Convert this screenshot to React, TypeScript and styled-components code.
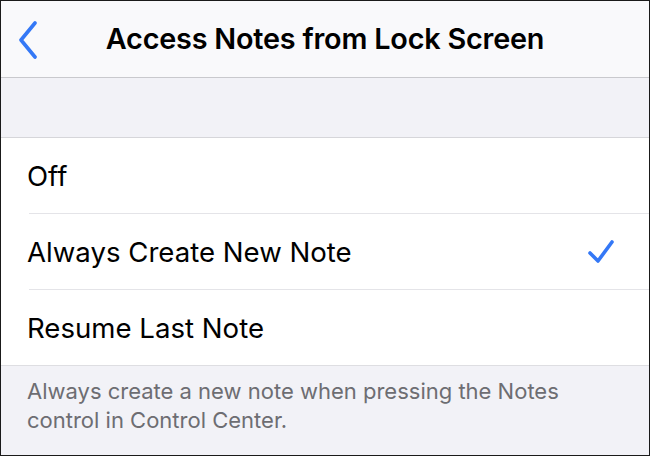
import React from "react";
import styled, { createGlobalStyle } from "styled-components";

const Global = createGlobalStyle`
  html, body { margin: 0; padding: 0; background: #f2f2f7; }
  * { box-sizing: border-box; }
`;

const Frame = styled.div`
  width: 650px;
  height: 456px;
  border: 1px solid #1a1a1a;
  background: #f2f2f7;
  display: flex;
  flex-direction: column;
  overflow: hidden;
  font-family: Inter, "Liberation Sans", sans-serif;
`;

const NavBar = styled.header`
  position: relative;
  height: 77px;
  flex-shrink: 0;
  background: #f9f9fb;
  border-bottom: 1px solid #c9c9cd;
  display: flex;
  align-items: center;
  justify-content: center;
`;

const BackButton = styled.button`
  position: absolute;
  left: 14px;
  top: 19px;
  width: 26px;
  height: 40px;
  border: 0;
  padding: 0;
  background: transparent;
  display: flex;
  align-items: center;
  justify-content: center;
`;

const Title = styled.h1`
  margin: 0 0 2px;
  font-size: 28.8px;
  font-weight: 600;
  color: #000;
  letter-spacing: -0.2px;
`;

const Spacer = styled.div`
  height: 60px;
  flex-shrink: 0;
  border-bottom: 1px solid #d6d6da;
`;

const List = styled.ul`
  margin: 0;
  padding: 0 0 0 28px;
  list-style: none;
  background: #fff;
  border-bottom: 1px solid #dedee2;
`;

const Row = styled.li<{ $last?: boolean }>`
  height: ${(p) => (p.$last ? "75px" : "76px")};
  display: flex;
  align-items: center;
  justify-content: space-between;
  padding-right: 34px;
  border-bottom: ${(p) => (p.$last ? "none" : "1px solid #e4e4e8")};
  font-size: 27.6px;
  color: #000;
`;

const Label = styled.span`
  margin-left: -2px;
`;

const Footer = styled.p`
  margin: 0;
  padding: 11px 40px 0 26px;
  font-size: 22px;
  line-height: 29px;
  color: #6d6d72;
`;

const Chevron = () => (
  <svg width="22" height="38" viewBox="0 0 22 38" fill="none">
    <path
      d="M18 2 L4 19 L18 36"
      stroke="#3478f6"
      strokeWidth="3.6"
      strokeLinecap="round"
      strokeLinejoin="round"
    />
  </svg>
);

const Check = () => (
  <svg width="28" height="26" viewBox="0 0 28 26" fill="none">
    <path
      d="M3 14 L11 22 L25 3"
      stroke="#3478f6"
      strokeWidth="3.6"
      strokeLinecap="round"
      strokeLinejoin="round"
    />
  </svg>
);

const options = ["Off", "Always Create New Note", "Resume Last Note"];
const selected = 1;

export default function App() {
  return (
    <>
      <Global />
      <Frame>
        <NavBar>
          <BackButton aria-label="Back">
            <Chevron />
          </BackButton>
          <Title>Access Notes from Lock Screen</Title>
        </NavBar>
        <Spacer />
        <List>
          {options.map((o, i) => (
            <Row key={o} $last={i === options.length - 1}>
              <Label>{o}</Label>
              {i === selected && <Check />}
            </Row>
          ))}
        </List>
        <Footer>
          Always create a new note when pressing the Notes control in Control Center.
        </Footer>
      </Frame>
    </>
  );
}
